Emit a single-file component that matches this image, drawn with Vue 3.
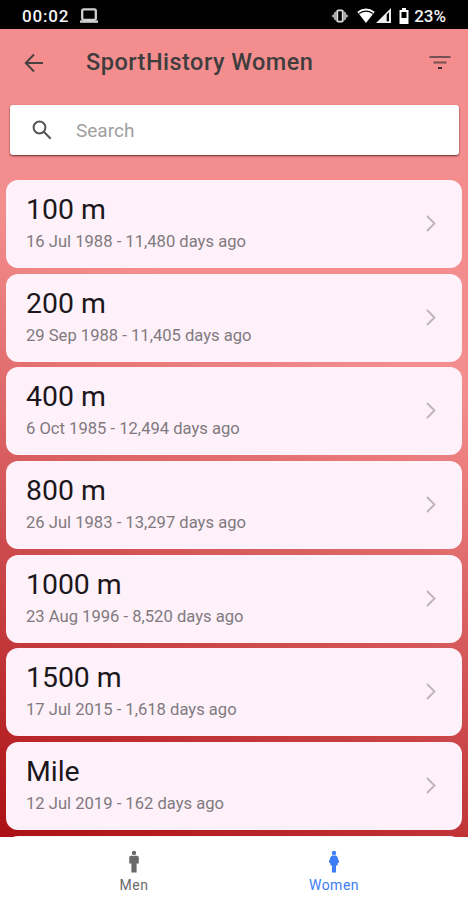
<template>
  <div class="screen">
    <div class="status-bar">
      <div class="status-left">
        <span>00:02</span>
        <svg width="20" height="16" viewBox="0 0 20 16">
          <rect x="3.2" y="1.4" width="13.6" height="10.4" rx="1.2" fill="none" stroke="#d0d0d0" stroke-width="2.3" />
          <rect x="1" y="12.4" width="18" height="2.4" fill="#d0d0d0" />
        </svg>
      </div>
      <div class="status-right">
        <svg width="18" height="14" viewBox="0 0 18 14">
          <path d="M5 2.500V11.500L3 10.500V9L.3 7L3 5V3.500zM13 2.500V11.500L15 10.500V9L17.700 7L15 5V3.500z" fill="#aaa" />
          <rect x="6.200" y="1.400" width="5.600" height="11.200" rx="1" fill="none" stroke="#ddd" stroke-width="1.900" />
        </svg>
        <svg class="wifi" width="18" height="15" viewBox="0 0 18 15">
          <path d="M.3 3.800Q9-2.800 17.700 3.800L9 15z" fill="#fff" />
          <path d="M2.200 5.400Q9 .8 15.800 5.400" fill="none" stroke="#000" stroke-width="1.200" />
        </svg>
        <svg class="signal" width="15" height="15" viewBox="0 0 15 15">
          <path d="M0 15L15 0V15zM10.700 6.500V13.200H13V4.200z" fill="#eee" fill-rule="evenodd" />
        </svg>
        <svg class="battery" width="10" height="16" viewBox="0 0 10 16">
          <path d="M3 0H7V2H9.500V16H.5V2H3zM2.500 4V10H7.500V4z" fill="#fff" fill-rule="evenodd" />
        </svg>
        <span>23%</span>
      </div>
    </div>

    <header class="toolbar">
      <button class="icon-btn" aria-label="Back">
        <svg width="20" height="20" viewBox="0 0 20 20" fill="none" stroke="#46403f" stroke-width="1.900">
          <path d="M19 10H2M10 1.500L1.700 10L10 18.500" />
        </svg>
      </button>
      <h1>SportHistory Women</h1>
      <button class="icon-btn" aria-label="Filter">
        <svg width="22" height="16" viewBox="0 0 22 16">
          <path d="M.5 1H21.500V3H.5zM4.500 6.500H17.500V8.500H4.500z" fill="#765052" />
          <path d="M9 12H13V14H9z" fill="#342f30" />
        </svg>
      </button>
    </header>

    <main class="content">
      <label class="search">
        <svg width="20" height="20" viewBox="0 0 20 20" fill="none" stroke="#555" stroke-width="2">
          <circle cx="7.500" cy="7.500" r="5.900" />
          <path d="M11.800 11.800L18.700 18.700" />
        </svg>
        <input v-model="query" type="text" placeholder="Search" />
      </label>

      <div class="events">
        <div v-for="event in filteredEvents" :key="event.name" class="event">
          <div class="event-info">
            <h2>{{ event.name }}</h2>
            <p>{{ event.date }} - {{ event.days }} days ago</p>
          </div>
          <svg class="chevron" width="10" height="17" viewBox="0 0 10 17" fill="none" stroke="#beb4bc" stroke-width="1.900">
            <path d="M1 1L8.500 8.500L1 16" />
          </svg>
        </div>
        <!-- top edge of the next card, cut off by the tab bar -->
        <div class="event"></div>
      </div>
    </main>

    <nav class="tabs">
      <button class="tab" :class="{ active: tab === 'men' }" @click="tab = 'men'">
        <svg width="12" height="24" viewBox="0 0 12 24" fill="currentColor">
          <circle cx="6" cy="2.900" r="2.200" />
          <path d="M3 5.700H9Q10.800 5.700 10.800 7.500V13.500H8.600V22.500H3.400V13.500H1.200V7.500Q1.200 5.700 3 5.700z" />
        </svg>
        <span>Men</span>
      </button>
      <button class="tab" :class="{ active: tab === 'women' }" @click="tab = 'women'">
        <svg width="12" height="24" viewBox="0 0 12 24" fill="currentColor">
          <circle cx="6" cy="2.900" r="2.200" />
          <path d="M4 5.500H8L9.500 7L11.200 12.300L9.600 13.500V15.500H8V22.500H4V15.500H2.400V13.500L.8 12.300L2.500 7z" />
        </svg>
        <span>Women</span>
      </button>
    </nav>
  </div>
</template>

<script setup>
import { computed, ref } from 'vue'

const query = ref('')
const tab = ref('women')

const events = [
  { name: '100 m', date: '16 Jul 1988', days: '11,480' },
  { name: '200 m', date: '29 Sep 1988', days: '11,405' },
  { name: '400 m', date: '6 Oct 1985', days: '12,494' },
  { name: '800 m', date: '26 Jul 1983', days: '13,297' },
  { name: '1000 m', date: '23 Aug 1996', days: '8,520' },
  { name: '1500 m', date: '17 Jul 2015', days: '1,618' },
  { name: 'Mile', date: '12 Jul 2019', days: '162' }
]

const filteredEvents = computed(() =>
  events.filter((event) => event.name.toLowerCase().includes(query.value.toLowerCase()))
)
</script>

<style>
body {
  margin: 0;
}
</style>

<style scoped>
.screen {
  width: 468px;
  height: 900px;
  display: flex;
  flex-direction: column;
  overflow: hidden;
  background: #f48e8e;
  font-family: Roboto, sans-serif;
}

.status-bar {
  height: 29px;
  flex-shrink: 0;
  box-sizing: border-box;
  padding: 2px 22px 0;
  display: flex;
  justify-content: space-between;
  align-items: center;
  background: #000;
  color: #f4f4f4;
  font-size: 17px;
  font-weight: 500;
}

.status-left,
.status-right {
  display: flex;
  align-items: center;
}

.status-left {
  gap: 10px;
}

.status-left span {
  letter-spacing: 0.8px;
}

.wifi {
  margin-left: 8px;
}

.signal {
  margin-left: 1px;
}

.battery {
  margin: 0 5px 0 8px;
}

.toolbar {
  height: 67px;
  flex-shrink: 0;
  box-sizing: border-box;
  padding: 0 17px 0 24px;
  display: flex;
  align-items: center;
}

.toolbar h1 {
  flex: 1;
  margin: -1px 0 0 42px;
  color: #3f3d3e;
  font-size: 23.5px;
  font-weight: 500;
  letter-spacing: 0.48px;
}

.icon-btn {
  display: flex;
  padding: 0;
  border: none;
  background: none;
  cursor: pointer;
}

.content {
  height: 741px;
  flex-shrink: 0;
  overflow: hidden;
  box-sizing: border-box;
  padding: 9px 6px 0;
  background: linear-gradient(201deg, #f48e8e 0%, #f48e8e 32%, #ac1014 100%);
}

.search {
  height: 50px;
  margin: 0 3px 25px 4px;
  padding: 0 22px;
  display: flex;
  align-items: center;
  gap: 24px;
  background: #fff;
  border-radius: 3px;
  box-shadow: 0 1px 2px rgba(60, 10, 10, 0.75);
}

.search input {
  flex: 1;
  min-width: 0;
  padding: 0;
  border: none;
  outline: none;
  background: none;
  color: #333;
  font-family: inherit;
  font-size: 19px;
}

.search input::placeholder {
  color: #a0a0a0;
  opacity: 1;
}

.events {
  display: flex;
  flex-direction: column;
  gap: 5.7px;
}

.event {
  height: 88px;
  flex-shrink: 0;
  box-sizing: border-box;
  padding: 0 26px 0 20px;
  display: flex;
  align-items: center;
  justify-content: space-between;
  background: #fef1fa;
  border-radius: 12px;
}

.event-info {
  padding-bottom: 3px;
}

.event h2 {
  margin: 0;
  color: #1b171b;
  font-size: 28.4px;
  line-height: 34px;
  font-weight: 400;
}

.event p {
  margin: 5px 0 0;
  color: #807a7f;
  font-size: 16.6px;
  line-height: 20px;
}

.chevron {
  margin-bottom: 1px;
}

.tabs {
  flex: 1;
  display: flex;
  padding: 0 34px;
  background: #fff;
}

.tab {
  flex: 1;
  display: flex;
  flex-direction: column;
  align-items: center;
  gap: 3px;
  padding: 13px 0 0;
  border: none;
  background: none;
  color: #6a6a6a;
  font-family: inherit;
  font-size: 14px;
  line-height: 17px;
  letter-spacing: 0.5px;
  cursor: pointer;
}

.tab.active {
  color: #3d7df5;
}
</style>
